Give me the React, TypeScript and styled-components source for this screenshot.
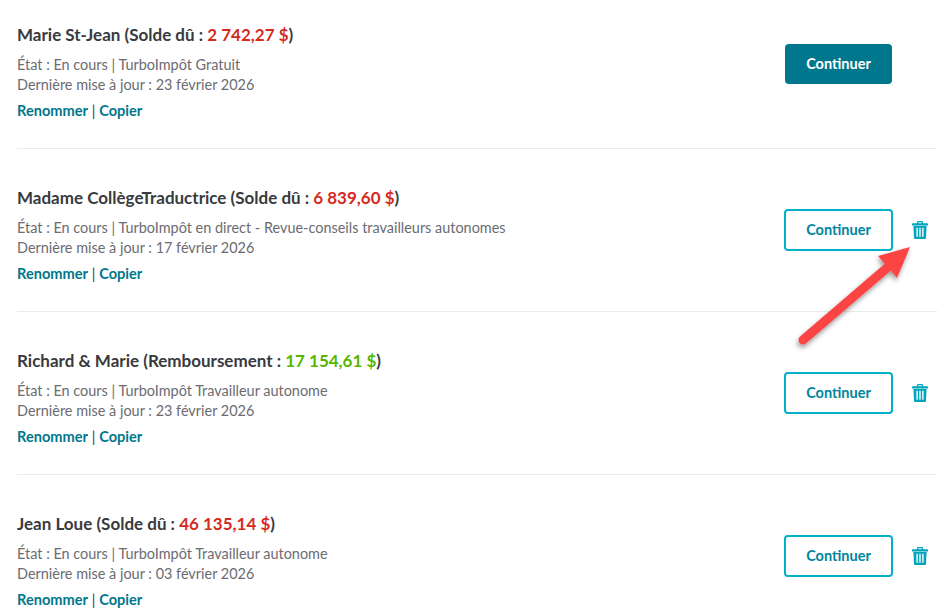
import React from 'react';
import styled, { createGlobalStyle } from 'styled-components';

const GlobalStyle = createGlobalStyle`
  html, body {
    margin: 0;
    padding: 0;
    height: 616px;
    overflow: hidden;
    background: #ffffff;
  }
`;

const Page = styled.div`
  position: relative;
  width: 943px;
  height: 616px;
  overflow: hidden;
  padding: 0 6px 0 17px;
  box-sizing: border-box;
  font-family: Lato, "Open Sans", sans-serif;
`;

const Row = styled.section`
  display: flex;
  justify-content: space-between;
  height: 163px;
  box-sizing: border-box;
  padding-top: 39px;
  border-bottom: 1px solid #e9eaea;
  &:first-child {
    height: 149px;
    padding-top: 25px;
  }
  &:last-child {
    border-bottom: 0;
  }
`;

const Info = styled.div`
  display: flex;
  flex-direction: column;
`;

const Title = styled.h2`
  margin: 0 0 10px;
  font-size: 17px;
  line-height: 20px;
  font-weight: 700;
  color: #393a3d;
`;

const Amount = styled.span<{ $refund?: boolean }>`
  color: ${(p) => (p.$refund ? '#53b700' : '#d52b1e')};
`;

const Meta = styled.p`
  margin: 0;
  font-size: 14.45px;
  line-height: 20px;
  color: #6b6c72;
`;

const Links = styled.div`
  margin-top: 6px;
  font-size: 14.6px;
  line-height: 20px;
  color: #393a3d;
`;

const TextLink = styled.a`
  font-weight: 700;
  color: #00778c;
  text-decoration: none;
`;

const Actions = styled.div<{ $primary?: boolean }>`
  display: flex;
  align-items: flex-start;
  width: 153px;
  padding-top: ${(p) => (p.$primary ? '19px' : '21px')};
`;

const Button = styled.button<{ $primary?: boolean }>`
  width: ${(p) => (p.$primary ? '107px' : '109px')};
  height: ${(p) => (p.$primary ? '40px' : '42px')};
  margin-left: ${(p) => (p.$primary ? '1px' : '0')};
  margin-right: ${(p) => (p.$primary ? '0' : '19px')};
  box-sizing: border-box;
  border-radius: 4px;
  border: 2px solid ${(p) => (p.$primary ? '#00778c' : '#00b1c9')};
  background: ${(p) => (p.$primary ? '#00778c' : '#ffffff')};
  color: ${(p) => (p.$primary ? '#ffffff' : '#00869e')};
  font-family: inherit;
  font-size: 14.5px;
  font-weight: 700;
  padding: 0 0 2px;
`;

const TrashButton = styled.span`
  display: flex;
  margin-top: 12px;
`;

const Arrow = styled.svg`
  position: absolute;
  left: 790px;
  top: 240px;
  overflow: visible;
`;

const Trash = () => (
  <TrashButton>
    <svg width="16" height="18" viewBox="0 0 16 18">
      <path
        fill="#00a4bb"
        fillRule="evenodd"
        d="M5 2.2V1.2C5 .5 5.5 0 6.2 0h3.6C10.5 0 11 .5 11 1.2v1h4.2c.4 0 .8.4.8.8v1.4H0V3c0-.4.4-.8.8-.8H5zm1.3 0h3.4V1.2H6.3v1zM1.4 5h13.2l-.6 11.7c0 .7-.6 1.3-1.3 1.3H3.3c-.7 0-1.3-.6-1.3-1.3L1.4 5zm3 1.8v9h1.4v-9H4.4zm2.9 0v9h1.4v-9H7.3zm2.9 0v9h1.4v-9h-1.4z"
      />
    </svg>
  </TrashButton>
);

const items = [
  {
    name: 'Marie St-Jean',
    label: 'Solde dû',
    amount: '2 742,27 $',
    product: 'TurboImpôt Gratuit',
    date: '23 février 2026',
    primary: true,
  },
  {
    name: 'Madame CollègeTraductrice',
    label: 'Solde dû',
    amount: '6 839,60 $',
    product: 'TurboImpôt en direct - Revue-conseils travailleurs autonomes',
    date: '17 février 2026',
  },
  {
    name: 'Richard & Marie',
    label: 'Remboursement',
    amount: '17 154,61 $',
    product: 'TurboImpôt Travailleur autonome',
    date: '23 février 2026',
    refund: true,
  },
  {
    name: 'Jean Loue',
    label: 'Solde dû',
    amount: '46 135,14 $',
    product: 'TurboImpôt Travailleur autonome',
    date: '03 février 2026',
  },
];

export default function App() {
  return (
    <Page>
      <GlobalStyle />
      {items.map((item) => (
        <Row key={item.name}>
          <Info>
            <Title>
              {item.name} ({item.label} : <Amount $refund={item.refund}>{item.amount}</Amount>)
            </Title>
            <Meta>État : En cours | {item.product}</Meta>
            <Meta>Dernière mise à jour : {item.date}</Meta>
            <Links>
              <TextLink href="#">Renommer</TextLink> | <TextLink href="#">Copier</TextLink>
            </Links>
          </Info>
          <Actions $primary={item.primary}>
            <Button $primary={item.primary}>Continuer</Button>
            {!item.primary && <Trash />}
          </Actions>
        </Row>
      ))}
      <Arrow width="120" height="105" viewBox="0 0 120 105">
        <defs>
          <filter id="arrowShadow" x="-30%" y="-30%" width="160%" height="160%">
            <feDropShadow dx="-1" dy="3" stdDeviation="2.5" floodColor="#000" floodOpacity="0.4" />
          </filter>
        </defs>
        <g filter="url(#arrowShadow)">
          <path d="M13 100L98 27" stroke="#fb4545" strokeWidth="9" strokeLinecap="round" fill="none" />
          <path d="M120 7L107 38 88 16z" fill="#fb4545" />
        </g>
      </Arrow>
    </Page>
  );
}
